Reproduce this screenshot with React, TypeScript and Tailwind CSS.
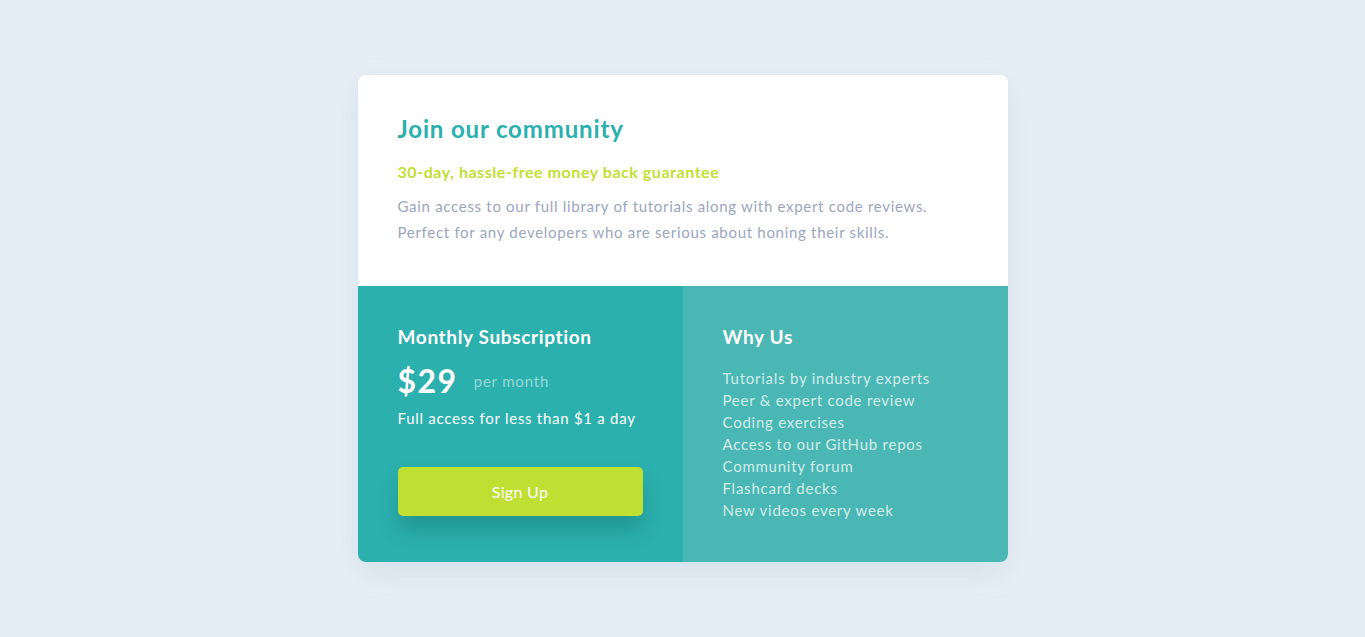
import React from "react";

const features = [
  "Tutorials by industry experts",
  "Peer & expert code review",
  "Coding exercises",
  "Access to our GitHub repos",
  "Community forum",
  "Flashcard decks",
  "New videos every week",
];

export default function App() {
  return (
    <div
      className="min-h-screen w-full bg-[#e6eef5] flex justify-center pt-[75px]"
      style={{ fontFamily: "Lato, 'Noto Sans', sans-serif" }}
    >
      <div className="w-[650px] h-[487px] rounded-lg overflow-hidden shadow-[0_10px_30px_rgba(120,150,180,0.15)] flex flex-col">
        <div className="bg-white h-[211px] px-10 pt-[38px]">
          <h1 className="text-[24px] leading-[32px] font-bold text-[#2bb0ae] tracking-[0.85px]">
            Join our community
          </h1>
          <p className="mt-[16px] text-[16px] leading-[22px] font-bold text-[#bfdf32] tracking-[0.55px]">
            30-day, hassle-free money back guarantee
          </p>
          <p className="mt-[10px] text-[15px] leading-[26px] text-[#9ba6be] tracking-[0.7px]">
            Gain access to our full library of tutorials along with expert code reviews.
            <br />
            Perfect for any developers who are serious about honing their skills.
          </p>
        </div>
        <div className="flex flex-1">
          <div className="w-1/2 bg-[#2bb0ae] px-10 pt-[38px]">
            <h2 className="text-[19px] leading-[26px] font-bold text-white tracking-[0.65px]">
              Monthly Subscription
            </h2>
            <div className="mt-[11px] flex items-center">
              <span className="text-[32px] leading-[40px] font-bold text-white tracking-[1.5px]">$29</span>
              <span className="ml-4 text-[15px] text-white/50 tracking-[0.8px]">per month</span>
            </div>
            <p className="mt-[6px] text-[15px] leading-[22px] text-white tracking-[0.72px]">
              Full access for less than $1 a day
            </p>
            <button className="mt-[38px] w-[245px] h-[49px] rounded-[5px] bg-[#bfe032] text-white text-[16px] tracking-[0.3px] shadow-[0_14px_20px_rgba(0,60,60,0.22)]">
              Sign Up
            </button>
          </div>
          <div className="w-1/2 bg-[#4bb7b4] px-10 pt-[38px]">
            <h2 className="text-[19px] leading-[26px] font-bold text-white tracking-[0.65px]">Why Us</h2>
            <ul className="mt-[17px] text-[15px] leading-[22px] text-white/75 tracking-[0.76px]">
              {features.map((f) => (
                <li key={f}>{f}</li>
              ))}
            </ul>
          </div>
        </div>
      </div>
    </div>
  );
}
